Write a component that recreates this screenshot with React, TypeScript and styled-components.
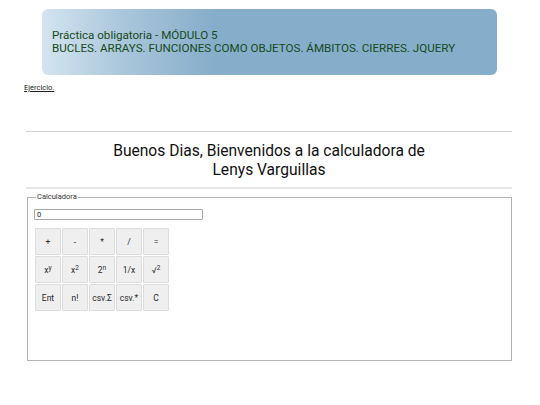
import styled, { createGlobalStyle } from "styled-components";

const GlobalStyle = createGlobalStyle`
    body {
        margin: 0;
        background: #ffffff;
        font-family: Roboto, "Liberation Sans", sans-serif;
        color: #222222;
    }
`;

const Page = styled.div`
    width: 486px;
    padding: 9px 28px 0 26px;
`;

const Banner = styled.header`
    box-sizing: border-box;
    width: 455px;
    height: 66px;
    margin-left: 16px;
    padding-left: 10px;
    border-radius: 6px;
    background: linear-gradient(to right, #d4e4ef 0%, #a9c6db 18%, #86adca 38%, #86adca 100%);
    display: flex;
    flex-direction: column;
    justify-content: center;
`;

const BannerLine = styled.div`
    font-size: 11.6px;
    line-height: 13px;
    color: #174a20;
`;

const ExerciseLink = styled.a`
    display: block;
    width: max-content;
    margin: 9px 0 0 -2px;
    font-size: 7.5px;
    line-height: 8px;
    color: #222222;
    text-decoration: underline;
`;

const Divider = styled.div<{ $thick?: boolean }>`
    height: ${(p) => (p.$thick ? "2px" : "1px")};
    background: ${(p) => (p.$thick ? "#e6e6e6" : "#d2d2d2")};
    margin-top: ${(p) => (p.$thick ? "7px" : "39px")};
`;

const Title = styled.h1`
    margin: 10px 0 0;
    font-size: 15.6px;
    line-height: 19px;
    font-weight: 400;
    color: #111111;
    text-align: center;
`;

const Fieldset = styled.fieldset`
    box-sizing: border-box;
    height: 168px;
    margin: 4px 0 0 1px;
    padding: 6px 6px 0 6px;
    border: 1px solid #b4b4b4;
    min-width: 0;
`;

const Legend = styled.legend`
    padding: 0 1px;
    margin-left: 2px;
    font-size: 7.5px;
    line-height: 8px;
    color: #333333;
`;

const Display = styled.input`
    box-sizing: border-box;
    display: block;
    width: 169px;
    height: 11px;
    margin: 2px 0 0;
    padding: 0 2px;
    border: 1px solid #a8a8a8;
    border-radius: 1px;
    font-family: Roboto, "Liberation Sans", sans-serif;
    font-size: 7.5px;
    color: #222222;
    outline: none;
`;

const Keypad = styled.div`
    display: grid;
    grid-template-columns: repeat(5, 26px);
    grid-auto-rows: 27px;
    gap: 1px;
    margin: 8px 0 0 1px;
`;

const Key = styled.button`
    box-sizing: border-box;
    margin: 0;
    padding: 0;
    background: #efefef;
    border: 1px solid #dcdcdc;
    border-radius: 1px;
    font-family: Roboto, "Liberation Sans", sans-serif;
    font-size: 8.5px;
    color: #2a2a2a;
    white-space: nowrap;

    sup {
        font-size: 6.5px;
        vertical-align: 3px;
        line-height: 0;
    }
`;

const keys: React.ReactNode[] = [
    "+", "-", "*", "/", "=",
    <>x<sup>y</sup></>,
    <>x<sup>2</sup></>,
    <>2<sup>n</sup></>,
    "1/x",
    <>√<sup>2</sup></>,
    "Ent", "n!", "csv.Σ", "csv.*", "C",
];

export default function App() {
    return (
        <Page>
            <GlobalStyle />
            <Banner>
                <BannerLine>Práctica obligatoria - MÓDULO 5</BannerLine>
                <BannerLine>BUCLES. ARRAYS. FUNCIONES COMO OBJETOS. ÁMBITOS. CIERRES. JQUERY</BannerLine>
            </Banner>
            <ExerciseLink href="#">Ejercicio.</ExerciseLink>
            <Divider />
            <Title>
                Buenos Dias, Bienvenidos a la calculadora de
                <br />
                Lenys Varguillas
            </Title>
            <Divider $thick />
            <Fieldset>
                <Legend>Calculadora</Legend>
                <Display type="text" defaultValue="0" />
                <Keypad>
                    {keys.map((k, i) => (
                        <Key key={i} type="button">{k}</Key>
                    ))}
                </Keypad>
            </Fieldset>
        </Page>
    );
}
